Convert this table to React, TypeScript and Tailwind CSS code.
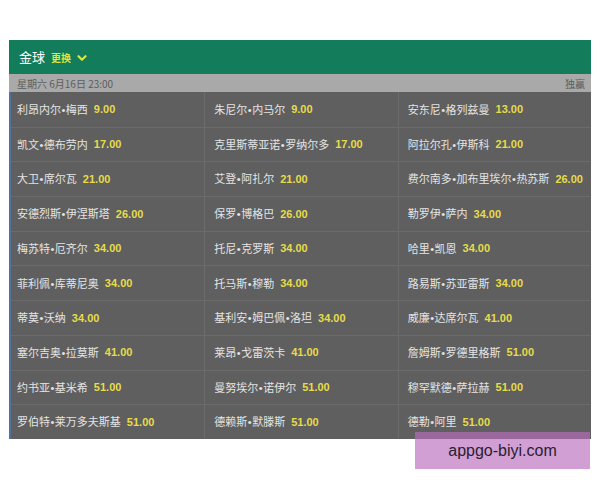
import React from 'react';

type Pick = { name: string; odds: string };

const rows: Pick[][] = [
  [
    { name: '利昂内尔•梅西', odds: '9.00' },
    { name: '朱尼尔•内马尔', odds: '9.00' },
    { name: '安东尼•格列兹曼', odds: '13.00' },
  ],
  [
    { name: '凯文•德布劳内', odds: '17.00' },
    { name: '克里斯蒂亚诺•罗纳尔多', odds: '17.00' },
    { name: '阿拉尔孔•伊斯科', odds: '21.00' },
  ],
  [
    { name: '大卫•席尔瓦', odds: '21.00' },
    { name: '艾登•阿扎尔', odds: '21.00' },
    { name: '费尔南多•加布里埃尔•热苏斯', odds: '26.00' },
  ],
  [
    { name: '安德烈斯•伊涅斯塔', odds: '26.00' },
    { name: '保罗•博格巴', odds: '26.00' },
    { name: '勒罗伊•萨内', odds: '34.00' },
  ],
  [
    { name: '梅苏特•厄齐尔', odds: '34.00' },
    { name: '托尼•克罗斯', odds: '34.00' },
    { name: '哈里•凯恩', odds: '34.00' },
  ],
  [
    { name: '菲利佩•库蒂尼奥', odds: '34.00' },
    { name: '托马斯•穆勒', odds: '34.00' },
    { name: '路易斯•苏亚雷斯', odds: '34.00' },
  ],
  [
    { name: '蒂莫•沃纳', odds: '34.00' },
    { name: '基利安•姆巴佩•洛坦', odds: '34.00' },
    { name: '威廉•达席尔瓦', odds: '41.00' },
  ],
  [
    { name: '塞尔吉奥•拉莫斯', odds: '41.00' },
    { name: '莱昂•戈雷茨卡', odds: '41.00' },
    { name: '詹姆斯•罗德里格斯', odds: '51.00' },
  ],
  [
    { name: '约书亚•基米希', odds: '51.00' },
    { name: '曼努埃尔•诺伊尔', odds: '51.00' },
    { name: '穆罕默德•萨拉赫', odds: '51.00' },
  ],
  [
    { name: '罗伯特•莱万多夫斯基', odds: '51.00' },
    { name: '德赖斯•默滕斯', odds: '51.00' },
    { name: '德勒•阿里', odds: '51.00' },
  ],
];

// the separator dot is drawn in a latin font so it stays narrow
function Name({ text }: { text: string }) {
  const parts = text.split('•');
  return (
    <span className="text-[#e4e4e4] text-[11px] whitespace-nowrap font-['Noto_Sans_CJK_SC',sans-serif]">
      {parts.map((p, i) => (
        <React.Fragment key={i}>
          {i > 0 && <span className="font-['Liberation_Sans',sans-serif] px-[0.5px]">•</span>}
          {p}
        </React.Fragment>
      ))}
    </span>
  );
}

export default function App() {
  return (
    <div className="relative w-[600px] h-[480px] bg-white overflow-hidden font-['Liberation_Sans','Noto_Sans_CJK_SC',sans-serif]">
      <div className="mx-auto mt-[40px] w-[582px]">
        {/* Header */}
        <div className="h-[34px] bg-[#137d5b] flex items-center pl-[10px] gap-[6px]">
          <span className="text-white text-[13px] font-['Noto_Sans_CJK_SC',sans-serif]">金球</span>
          <span className="text-[#dfe43a] text-[10px] font-bold font-['Noto_Sans_CJK_SC',sans-serif]">更换</span>
          <svg className="w-[10px] h-[10px] mt-[1px]" viewBox="0 0 10 10" fill="none" stroke="#dfe43a" strokeWidth={2.2}>
            <path d="M1.5 3.2 L5 6.7 L8.5 3.2" strokeLinecap="round" strokeLinejoin="round" />
          </svg>
        </div>

        {/* Date bar */}
        <div className="h-[18px] bg-[#a9a9a9] flex items-center justify-between pl-[8px] pr-[6px] text-[10px] text-[#5d5d5d] font-['Noto_Sans_CJK_SC',sans-serif]">
          <span>星期六 6月16日 23:00</span>
          <span>独赢</span>
        </div>

        {/* Picks */}
        <div className="bg-[#5f5f5f] border-l-2 border-[#56709a]">
          {rows.map((row, i) => (
            <div key={i} className={`grid grid-cols-3 h-[34.7px] ${i > 0 ? 'border-t border-[#6b6b6b]' : ''}`}>
              {row.map((p, j) => (
                <div
                  key={j}
                  className={`flex items-center gap-[6px] ${j > 0 ? 'border-l border-[#6b6b6b] pl-[9px]' : 'pl-[6px]'}`}
                >
                  <Name text={p.name} />
                  <span className="text-[#e6dc4a] text-[11px] font-bold">{p.odds}</span>
                </div>
              ))}
            </div>
          ))}
        </div>
      </div>

      {/* Watermark */}
      <div className="absolute left-[415px] top-[432px] w-[175px] h-[37px] bg-[rgba(185,110,190,0.66)] flex items-center justify-center">
        <span className="text-[#2a2030] text-[16px] font-['Liberation_Sans',sans-serif]">appgo-biyi.com</span>
      </div>
    </div>
  );
}
